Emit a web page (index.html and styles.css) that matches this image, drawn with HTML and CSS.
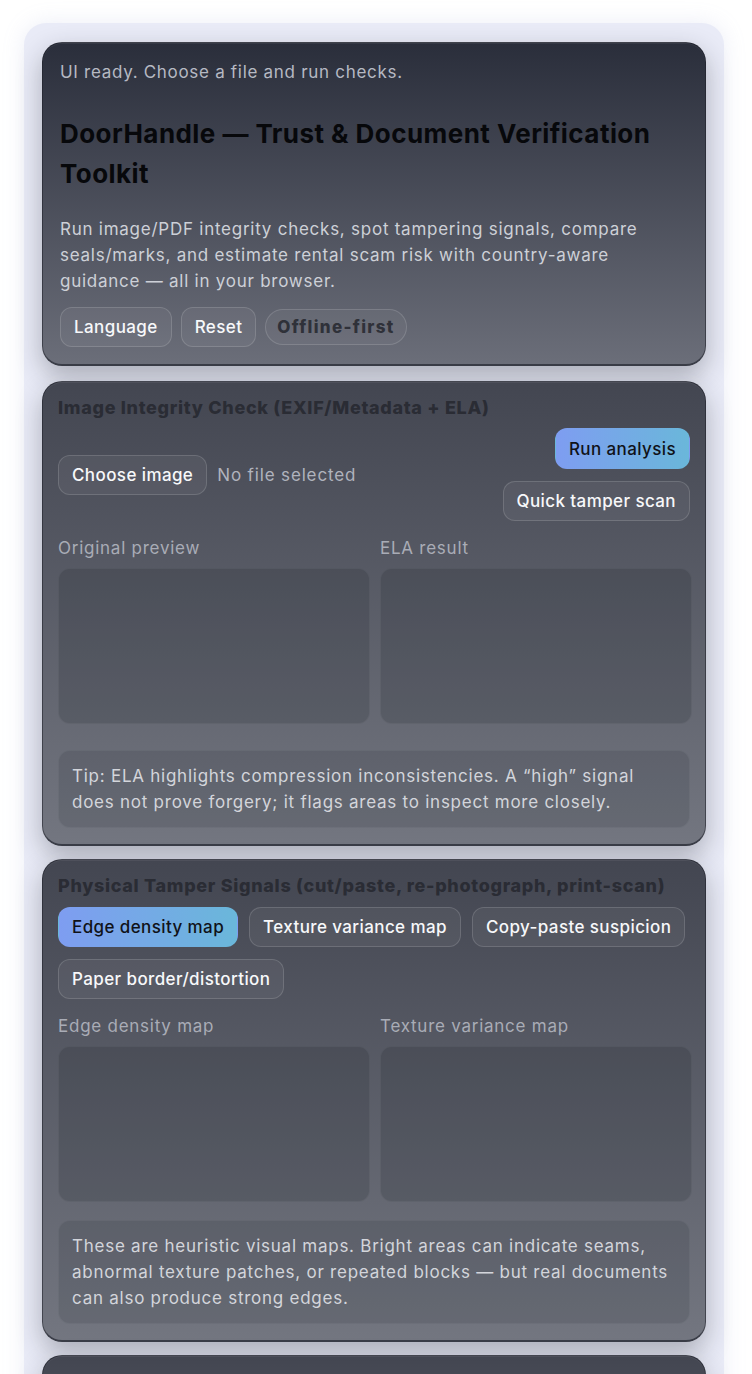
FILE: index.html
```html
<!DOCTYPE html>
<html lang="en">
<head>
<meta charset="utf-8">
<title>DoorHandle — Trust &amp; Document Verification Toolkit</title>
<link rel="stylesheet" href="styles.css">
</head>
<body>
<div class="app">
  <section class="card hero">
    <p class="status">UI ready. Choose a file and run checks.</p>
    <h1 class="title">DoorHandle — Trust &amp; Document Verification Toolkit</h1>
    <p class="lead">Run image/PDF integrity checks, spot tampering signals, compare seals/marks, and estimate rental scam risk with country-aware guidance — all in your browser.</p>
    <div class="actions">
      <button class="btn">Language</button>
      <button class="btn">Reset</button>
      <span class="pill">Offline-first</span>
    </div>
  </section>

  <section class="card">
    <h2 class="card-title">Image Integrity Check (EXIF/Metadata + ELA)</h2>
    <div class="file-row">
      <div class="file-pick">
        <button class="btn">Choose image</button>
        <span class="muted">No file selected</span>
      </div>
      <div class="stack">
        <button class="btn primary">Run analysis</button>
        <button class="btn">Quick tamper scan</button>
      </div>
    </div>
    <div class="previews">
      <div class="preview">
        <div class="label">Original preview</div>
        <div class="canvas"></div>
      </div>
      <div class="preview">
        <div class="label">ELA result</div>
        <div class="canvas"></div>
      </div>
    </div>
    <div class="note tip">Tip: ELA highlights compression inconsistencies. A “high” signal does not prove forgery; it flags areas to inspect more closely.</div>
  </section>

  <section class="card">
    <h2 class="card-title">Physical Tamper Signals (cut/paste, re-photograph, print-scan)</h2>
    <div class="tabs">
      <button class="btn primary">Edge density map</button>
      <button class="btn">Texture variance map</button>
      <button class="btn">Copy-paste suspicion</button>
      <button class="btn">Paper border/distortion</button>
    </div>
    <div class="previews">
      <div class="preview">
        <div class="label">Edge density map</div>
        <div class="canvas"></div>
      </div>
      <div class="preview">
        <div class="label">Texture variance map</div>
        <div class="canvas"></div>
      </div>
    </div>
    <div class="note maps">These are heuristic visual maps. Bright areas can indicate seams, abnormal texture patches, or repeated blocks — but real documents can also produce strong edges.</div>
  </section>

  <section class="card last"></section>
</div>
</body>
</html>
```

FILE: styles.css
```css
* { box-sizing: border-box; }

html, body {
  margin: 0;
  padding: 0;
  background: #ffffff;
}

body {
  font-family: Inter, "Noto Sans", "DejaVu Sans", sans-serif;
  color: #f3f4f7;
  overflow: hidden;
}

.app {
  width: 700px;
  margin: 23px 0 0 24px;
  padding: 19px 18px 18px;
  background: #e9ebf7;
  border-radius: 22px;
  box-shadow: 0 0 22px rgba(150, 158, 210, 0.18);
  display: flex;
  flex-direction: column;
  gap: 13px;
}

.card {
  width: 664px;
  border-radius: 20px;
  padding: 15px 15px 16px;
  background: linear-gradient(180deg, #434651 0%, #737680 100%);
  border: 1px solid rgba(30, 32, 40, 0.55);
  border-bottom: 2px solid #3a3d47;
  box-shadow: 0 10px 26px rgba(40, 44, 52, 0.32), inset 0 1px 0 rgba(255, 255, 255, 0.06);
}

.hero {
  padding: 17px 17px 17px;
  margin-bottom: 2px;
  background: linear-gradient(180deg, #2a2e3b 0%, #6b6e79 100%);
}

.status {
  margin: 0;
  font-size: 17px;
  line-height: 24px;
  color: #b6b9c3;
  letter-spacing: 0.7px;
}

.title {
  margin: 30px 0 22px;
  font-size: 26px;
  line-height: 40px;
  font-weight: 700;
  color: #07080b;
  letter-spacing: 0.45px;
}

.lead {
  margin: 0 0 13px;
  font-size: 17px;
  line-height: 26px;
  color: #cdd0d7;
  letter-spacing: 0.75px;
}

.actions {
  display: flex;
  align-items: center;
  gap: 9px;
}

.btn {
  height: 40px;
  padding: 0 13px;
  border-radius: 12px;
  border: 1px solid rgba(255, 255, 255, 0.14);
  background: rgba(255, 255, 255, 0.05);
  color: #f7f8fa;
  font-family: inherit;
  font-size: 17px;
  font-weight: 500;
  letter-spacing: 0.4px;
  white-space: nowrap;
}

.btn.primary {
  background: linear-gradient(90deg, #7e9df1 0%, #6ab7da 100%);
  border-color: transparent;
  color: #101218;
}

.pill {
  display: inline-flex;
  align-items: center;
  height: 36px;
  padding: 0 11px;
  border-radius: 999px;
  border: 1px solid rgba(255, 255, 255, 0.14);
  background: rgba(255, 255, 255, 0.04);
  color: #2f3139;
  font-size: 17px;
  font-weight: 800;
  letter-spacing: 1.3px;
}

.card-title {
  margin: 0;
  font-size: 18px;
  line-height: 22px;
  font-weight: 800;
  color: #2a2c34;
  letter-spacing: 0.68px;
}

.file-row {
  margin-top: 9px;
  display: flex;
  justify-content: space-between;
  align-items: center;
}

.file-pick {
  display: flex;
  align-items: center;
  gap: 10px;
}

.muted {
  font-size: 17px;
  color: #b0b3bd;
  letter-spacing: 0.85px;
}

.stack {
  display: flex;
  flex-direction: column;
  align-items: flex-end;
  gap: 12px;
}

.stack .primary { height: 41px; }

.tabs {
  margin-top: 10px;
  display: flex;
  flex-wrap: wrap;
  gap: 12px 11px;
}

.previews {
  margin-top: 15px;
  display: grid;
  grid-template-columns: 312px 312px;
  gap: 10px;
}

.label {
  font-size: 17px;
  line-height: 24px;
  color: #a9acb6;
  letter-spacing: 0.75px;
  margin-bottom: 8px;
}

.canvas {
  height: 156px;
  border-radius: 12px;
  background: rgba(20, 22, 30, 0.16);
  border: 1px solid rgba(255, 255, 255, 0.05);
}

.note {
  padding: 12px 13px;
  border-radius: 12px;
  background: rgba(20, 22, 30, 0.12);
  border: 1px solid rgba(255, 255, 255, 0.05);
  font-size: 17px;
  line-height: 26px;
  color: #d3d5db;
  letter-spacing: 0.75px;
}

.tip { margin-top: 26px; }
.maps { margin-top: 18px; }

.last {
  height: 300px;
  background: linear-gradient(180deg, #434651 0%, #737680 100%);
}
```
